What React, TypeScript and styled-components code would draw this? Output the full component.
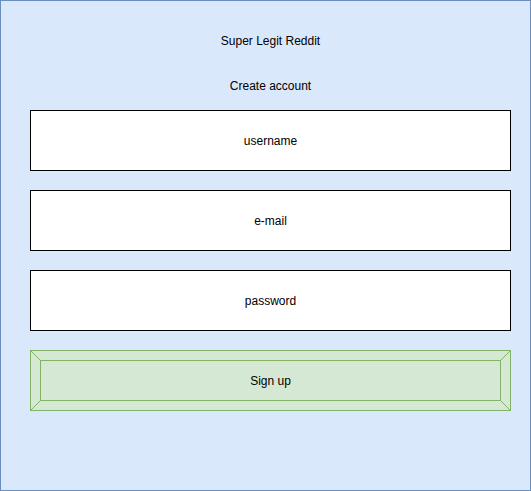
import React from "react";
import styled, { createGlobalStyle } from "styled-components";

const Global = createGlobalStyle`
  html, body { margin: 0; padding: 0; background: #ffffff; }
  body { font-family: "Liberation Sans", Arial, sans-serif; }
`;

const Frame = styled.div`
  width: 531px;
  height: 491px;
  box-sizing: border-box;
  border: 1px solid #6c8ebf;
  background: #dae8fc;
  padding: 30px 0 0 29px;
  display: flex;
  flex-direction: column;
`;

const Column = styled.div`
  width: 481px;
  display: flex;
  flex-direction: column;
`;

const Heading = styled.div<{ $after: number }>`
  height: 20px;
  line-height: 20px;
  font-size: 12px;
  color: #000;
  text-align: center;
  margin-bottom: ${(p) => p.$after}px;
`;

const Fields = styled.div`
  display: flex;
  flex-direction: column;
  gap: 19px;
`;

const Field = styled.div`
  height: 61px;
  box-sizing: border-box;
  border: 1px solid #000;
  background: #fff;
  display: flex;
  align-items: center;
  justify-content: center;
  font-size: 12px;
  color: #000;
`;

const Button = styled.div`
  position: relative;
  height: 61px;
  box-sizing: border-box;
  border: 1px solid #82b366;
  background: #d5e8d4;
  padding: 9px;
  display: flex;
`;

const ButtonFace = styled.div`
  flex: 1;
  box-sizing: border-box;
  border: 1px solid #82b366;
  display: flex;
  align-items: center;
  justify-content: center;
  font-size: 12px;
  color: #000;
`;

const Bevel = styled.svg`
  position: absolute;
  left: -1px;
  top: -1px;
  width: 481px;
  height: 61px;
  pointer-events: none;
`;

export default function App() {
  return (
    <>
      <Global />
      <Frame>
        <Column>
          <Heading $after={25}>Super Legit Reddit</Heading>
          <Heading $after={14}>Create account</Heading>
          <Fields>
            <Field>username</Field>
            <Field>e-mail</Field>
            <Field>password</Field>
            <Button>
              <Bevel viewBox="0 0 481 61">
                <g stroke="#82b366" strokeWidth="1">
                  <line x1="0.5" y1="0.5" x2="10.5" y2="10.5" />
                  <line x1="480.5" y1="0.5" x2="470.5" y2="10.5" />
                  <line x1="0.5" y1="60.5" x2="10.5" y2="50.5" />
                  <line x1="480.5" y1="60.5" x2="470.5" y2="50.5" />
                </g>
              </Bevel>
              <ButtonFace>Sign up</ButtonFace>
            </Button>
          </Fields>
        </Column>
      </Frame>
    </>
  );
}
